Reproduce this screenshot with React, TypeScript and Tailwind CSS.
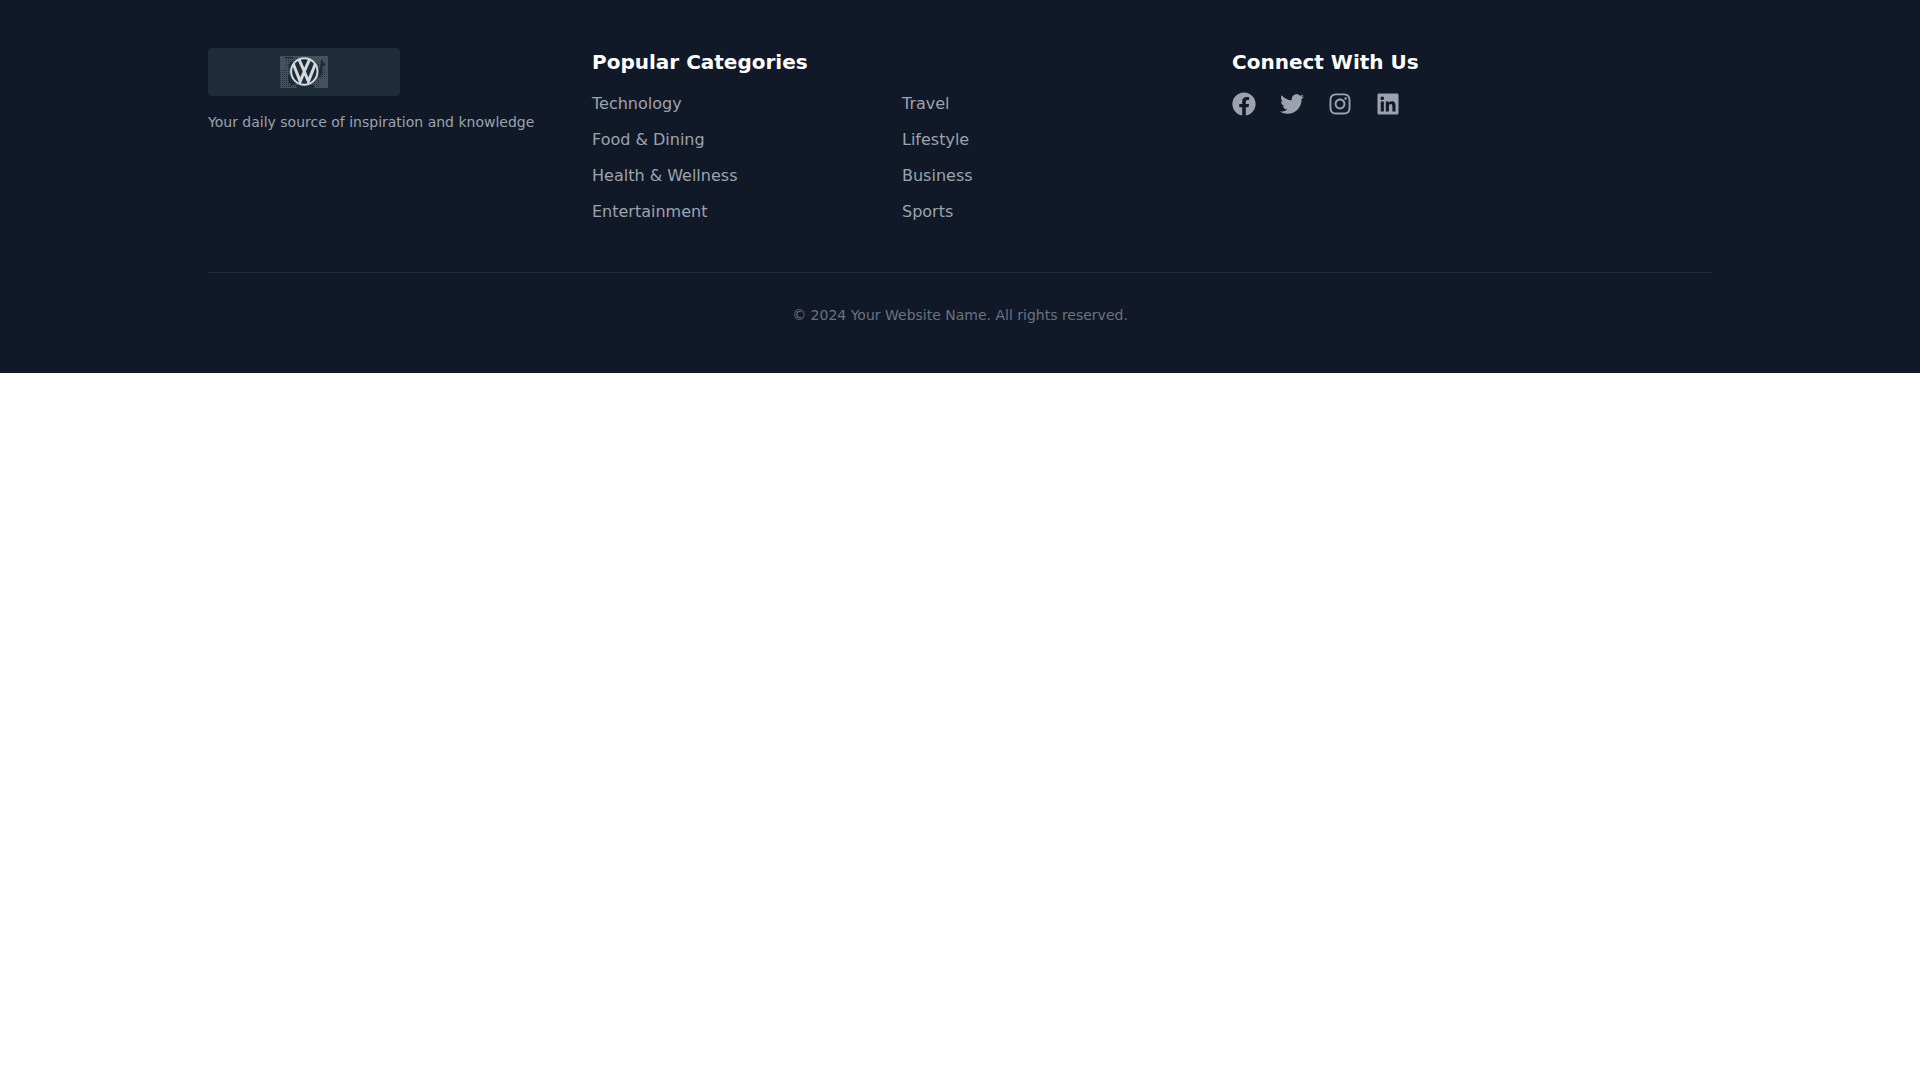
import { FaFacebook, FaInstagram, FaLinkedin, FaTwitter } from "react-icons/fa";

const categories = [
  "Technology",
  "Travel",
  "Food & Dining",
  "Lifestyle",
  "Health & Wellness",
  "Business",
  "Entertainment",
  "Sports",
];

const socials = [
  { name: "Facebook", Icon: FaFacebook },
  { name: "Twitter", Icon: FaTwitter },
  { name: "Instagram", Icon: FaInstagram },
  { name: "LinkedIn", Icon: FaLinkedin },
];

function Logo() {
  return (
    <svg viewBox="0 0 48 32" className="h-8 w-12" role="img" aria-label="Logo">
      <defs>
        <pattern id="dots" width="2" height="2" patternUnits="userSpaceOnUse">
          <rect width="1" height="1" fill="#1e2b38" />
        </pattern>
      </defs>
      <rect width="48" height="32" fill="#42525f" />
      {/* shaded parts of the backdrop */}
      <path
        d="M5 2h12v6l-5 5H8L5 8zM0 13h9l3 10 6 9H0zM34 6h8l4 10v6l-8 1zM31 28l8-5v9h-8z"
        fill="url(#dots)"
      />
      <path
        d="M4 1h9v1H4zM9 8l3-3v5l-3 3zM8 18l3 1 5 9-5 2-3-5zM41 4h2v3h2v3h-3v8l-3 4-1-8 3-4zM15 29h19v3H17z"
        fill="#1e2b38"
      />
      <circle cx="24.3" cy="15.5" r="14" fill="#1e2b38" />
      <g fill="none" stroke="#d5d9de">
        <circle cx="24.3" cy="15.5" r="13.2" strokeWidth="2" />
        {/* V */}
        <path d="M19 3.4 L24.3 15.4 L29.6 3.4" strokeWidth="3" />
        {/* W */}
        <path
          d="M13.4 8.2 L20.2 25.4 L24.3 15.6 L28.4 25.4 L35.2 8.2"
          strokeWidth="3"
        />
      </g>
    </svg>
  );
}

export default function App() {
  return (
    <footer className="bg-[#111827] py-12 font-['DejaVu_Sans',sans-serif] text-white">
      <div className="container mx-auto px-4">
        <div className="grid grid-cols-1 gap-8 md:grid-cols-12">
          <div className="md:col-span-3">
            <a
              href="#"
              className="mb-4 flex h-12 w-48 items-center justify-center rounded bg-[#1e2b38]"
            >
              <Logo />
            </a>
            <p className="text-sm text-[#9ca3af]">
              Your daily source of inspiration and knowledge
            </p>
          </div>

          <div className="md:col-span-5">
            <h3 className="mb-4 text-xl font-bold">Popular Categories</h3>
            <ul className="grid grid-cols-2 gap-3">
              {categories.map((category) => (
                <li key={category}>
                  <a href="#" className="text-[#9ca3af] hover:text-white">
                    {category}
                  </a>
                </li>
              ))}
            </ul>
          </div>

          <div className="md:col-span-4">
            <h3 className="mb-4 text-xl font-bold">Connect With Us</h3>
            <div className="flex gap-6">
              {socials.map(({ name, Icon }) => (
                <a
                  key={name}
                  href="#"
                  aria-label={name}
                  className="text-[#9ca3af] hover:text-white"
                >
                  <Icon size={24} />
                </a>
              ))}
            </div>
          </div>
        </div>

        <div className="mt-12 border-t border-[#1e2b38] pt-8 text-center">
          <p className="text-sm text-[#6b7280]">
            © 2024 Your Website Name. All rights reserved.
          </p>
        </div>
      </div>
    </footer>
  );
}
